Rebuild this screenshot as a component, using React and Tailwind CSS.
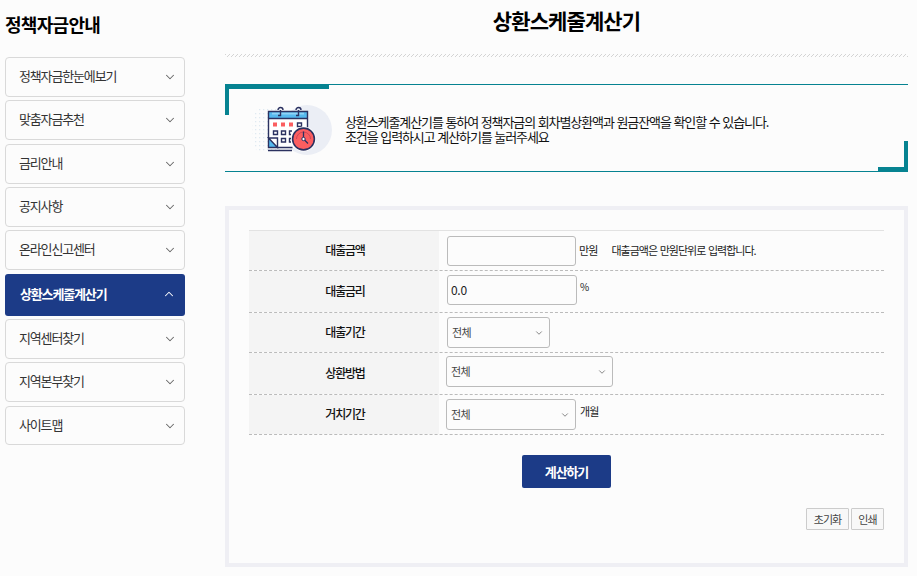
import { ChevronDown, ChevronUp } from 'lucide-react';

const menu = [
    { label: '정책자금한눈에보기', gap: 'mt-0 h-10' },
    { label: '맞춤자금추천', gap: 'mt-[3px] h-10' },
    { label: '금리안내', gap: 'mt-1 h-10' },
    { label: '공지사항', gap: 'mt-[3px] h-10' },
    { label: '온라인신고센터', gap: 'mt-[3px] h-10' },
    { label: '상환스케줄계산기', gap: 'mt-1 h-[42px]', active: true },
    { label: '지역센터찾기', gap: 'mt-[3px] h-10' },
    { label: '지역본부찾기', gap: 'mt-[3px] h-10' },
    { label: '사이트맵', gap: 'mt-1 h-[39px]' },
];

function MenuItem({ item }) {
    if (item.active) {
        return (
            <li className={`${item.gap} flex items-center justify-between rounded-[3px] bg-[#1c3b87] pl-[15px] pr-[9px] text-[13px] font-bold tracking-[-1.15px] text-white`}>
                <span className="pb-0.5">{item.label}</span>
                <ChevronUp size={14} strokeWidth={1.8} className="mb-0.5" />
            </li>
        );
    }
    return (
        <li className={`${item.gap} flex items-center justify-between rounded-[4px] border border-[#d9d9d9] pl-[13px] pr-[7px] text-[13px] tracking-[-1.15px] text-[#333]`}>
            <span className="pb-0.5">{item.label}</span>
            <ChevronDown size={14} strokeWidth={1.8} className="text-[#666]" />
        </li>
    );
}

function CalendarIcon() {
    return (
        <svg width="82" height="52" viewBox="0 0 82 52" fill="none">
            <defs>
                <pattern id="dots" width="4" height="4" patternUnits="userSpaceOnUse">
                    <rect x="1" y="1" width="1.3" height="1.3" fill="#dfe9f1" />
                </pattern>
            </defs>
            <path d="M8 4h22v44H8C0 40 0 12 8 4z" fill="url(#dots)" />
            <circle cx="57" cy="26" r="25" fill="#ebeef5" />
            <path d="M18 7h40v37H18z" fill="#fff" />
            <path d="M18 8h40v6H18z" fill="#56b9ee" />
            <path d="M22 8.500h32v2H22z" fill="#8ed3f7" />
            <path d="M18 34l9 9h-9z" fill="#56b9ee" />
            <g stroke="#2b3160" strokeWidth="1.4">
                <path d="M18.500 7.500h39V24M18.500 6.800V43.500h24M18 14.500h40M18.500 34l9 9.500v-9.500zM18 46.500h24" />
                <path d="M28 11.500h2.500V6M28 6a2.500 2.500 0 0 1 5 0M46 11.500h2.500V6M46 6a2.500 2.500 0 0 1 5 0" />
                <path d="M47.500 19h4v3.500h-4zM23.500 27h4v3.500h-4zM31.500 27h4v3.500h-4zM31.500 34.500h4v3.500h-4zM42 27h-2.500v3.500H41M41 34.500h-1.500v3.500H41" />
            </g>
            <path d="M23 18.500h4v4h-4zM31 18.500h4v4h-4zM39 18.500h4v4h-4z" fill="#fb5e60" />
            <circle cx="53.500" cy="35" r="12.500" fill="#fff" />
            <circle cx="53.500" cy="35" r="10.900" fill="#fb5e60" stroke="#2b3160" strokeWidth="1.600" />
            <path d="M46.500 35a7 7 0 0 1 14 0" stroke="#c9485a" strokeWidth="1" />
            <path d="M53.500 27.500V35l4.500 4.500" stroke="#2b3160" strokeWidth="1.300" />
            <circle cx="53.500" cy="35" r="1.700" fill="#fff" stroke="#2b3160" />
        </svg>
    );
}

function Row({ label, height, children }) {
    return (
        <div className={`${height} flex border-b border-dashed border-[#bbb]`}>
            <div className="flex w-[190px] shrink-0 items-center justify-center bg-[#f4f4f4] pb-0.5 pl-0.5 text-[12px] font-medium tracking-[-1.2px] text-[#111]">
                {label}
            </div>
            <div className="flex items-start text-[11px] tracking-[-0.9px] text-[#222]">{children}</div>
        </div>
    );
}

function Select({ className }) {
    return (
        <div className={`${className} flex items-center justify-between rounded-[3px] border border-[#bbb] pl-1 pr-[5px] text-[11px] tracking-[-0.5px] text-[#444]`}>
            <span className="pb-px">전체</span>
            <ChevronDown size={10} strokeWidth={2.4} className="text-[#888]" />
        </div>
    );
}

export default function App() {
    return (
        <div className="flex h-[576px] w-[917px] overflow-hidden bg-[#fcfcfc] font-['Noto_Sans_CJK_KR',sans-serif]">
            <aside className="ml-[5px] w-[180px] shrink-0">
                <h2 className="h-[57px] pt-[11px] text-[18px] font-bold leading-[26px] tracking-[-0.7px] text-black">정책자금안내</h2>
                <ul>
                    {menu.map((item) => (
                        <MenuItem key={item.label} item={item} />
                    ))}
                </ul>
            </aside>

            <main className="ml-10 w-[683px] shrink-0">
                <h1 className="h-[54px] pt-[5px] text-center text-[21px] font-bold leading-[30px] tracking-[-0.9px] text-black">상환스케줄계산기</h1>
                <div className="h-[3px] bg-[repeating-linear-gradient(135deg,#d4d4d4_0_1px,transparent_1px_2.83px)]" />

                <section className="relative mt-[27px] flex h-[88px] items-start border-y border-[#068391]">
                    <span className="absolute -top-px left-0 h-[31px] w-[104px] border-l-4 border-t-[5px] border-[#068391] [clip-path:polygon(0_0,100%_0,100%_5px,4px_5px,4px_100%,0_100%)]" />
                    <span className="absolute -bottom-px right-0 h-[31px] w-[30px] border-b-[5px] border-r-4 border-[#068391]" />
                    <div className="ml-[25px] mt-[19px]">
                        <CalendarIcon />
                    </div>
                    <p className="ml-[13px] mt-[29px] whitespace-nowrap text-[13px] leading-[15px] tracking-[-1.1px] text-[#111] [word-spacing:0.9px]">
                        상환스케줄계산기를 통하여 정책자금의 회차별상환액과 원금잔액을 확인할 수 있습니다.
                        <br />
                        조건을 입력하시고 계산하기를 눌러주세요
                    </p>
                </section>

                <section className="mt-[34px] h-[361px] border-4 border-[#efeff4] px-5 pt-5">
                    <div className="border-t border-[#e2e2e2]">
                        <Row label="대출금액" height="h-10">
                            <input className="ml-2 mt-[5px] h-[30px] w-[129px] rounded-[3px] border border-[#bbb] px-1" />
                            <span className="ml-[3px] mt-[11px] leading-4">만원</span>
                            <span className="ml-[14px] mt-[11px] leading-4 tracking-[-1px] [word-spacing:1.2px]">대출금액은 만원단위로 입력합니다.</span>
                        </Row>
                        <Row label="대출금리" height="h-[42px]">
                            <input defaultValue="0.0" className="ml-2 mt-1 h-[30px] w-[130px] rounded-[3px] border border-[#bbb] pb-0.5 pl-[3px] text-[12px] tracking-[-0.3px]" />
                            <span className="ml-[3px] mt-2 text-[10px] leading-4">%</span>
                        </Row>
                        <Row label="대출기간" height="h-10">
                            <Select className="ml-2 mt-1 h-[31px] w-[103px]" />
                        </Row>
                        <Row label="상환방법" height="h-[42px]">
                            <Select className="ml-[7px] mt-[3px] h-[31px] w-[167px]" />
                        </Row>
                        <Row label="거치기간" height="h-10">
                            <Select className="ml-[7px] mt-1 h-[31px] w-[130px]" />
                            <span className="ml-1 mt-2 leading-4">개월</span>
                        </Row>
                    </div>

                    <div className="mt-5 flex justify-center">
                        <button className="h-[33px] w-[89px] rounded-[2px] bg-[#1c3b87] text-[13px] font-bold tracking-[-1.1px] text-white">계산하기</button>
                    </div>
                    <div className="mt-5 flex justify-end gap-0.5 text-[11px] tracking-[-0.9px] text-[#444]">
                        <button className="h-[22px] w-[43px] rounded-[1px] border border-[#ccc] bg-[#f8f8f8]">초기화</button>
                        <button className="h-[22px] w-[33px] rounded-[1px] border border-[#ccc] bg-[#f8f8f8]">인쇄</button>
                    </div>
                </section>
            </main>
        </div>
    );
}
